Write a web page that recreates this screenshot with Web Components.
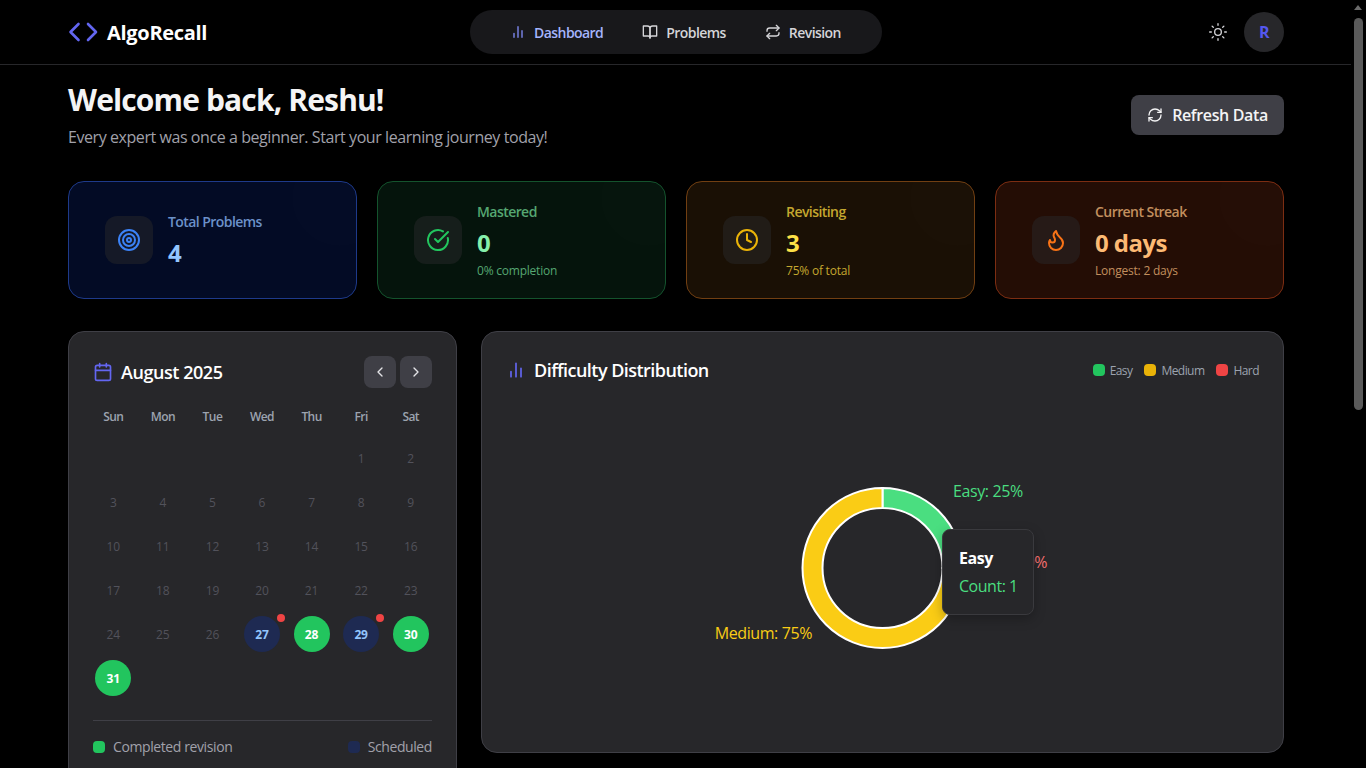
<!DOCTYPE html>
<html lang="en">
<head>
<meta charset="utf-8">
<title>AlgoRecall</title>
<style>
  html,body{ margin:0; height:768px; overflow:hidden; background:#000; }
  body{ font-family:"Open Sans","Noto Sans",sans-serif; color:#fff; letter-spacing:-.56px; }
</style>
</head>
<body>
<x-app>
  <x-header></x-header>
  <x-welcome name="Reshu"></x-welcome>
  <x-stats>
    <x-stat tone="blue" icon="target" label="Total Problems" value="4"></x-stat>
    <x-stat tone="green" icon="check" label="Mastered" value="0" sub="0% completion"></x-stat>
    <x-stat tone="yellow" icon="clock" label="Revisiting" value="3" sub="75% of total"></x-stat>
    <x-stat tone="orange" icon="flame" label="Current Streak" value="0 days" sub="Longest: 2 days"></x-stat>
  </x-stats>
  <x-panels>
    <x-calendar></x-calendar>
    <x-difficulty></x-difficulty>
  </x-panels>
</x-app>
<x-scrollbar></x-scrollbar>

<script>
const ICONS = {
  bars: '<path d="M18 20V10M12 20V4M6 20v-6"/>',
  book: '<path d="M2 3h6a4 4 0 0 1 4 4v14a3 3 0 0 0-3-3H2z"/><path d="M22 3h-6a4 4 0 0 0-4 4v14a3 3 0 0 1 3-3h7z"/>',
  repeat: '<path d="m17 2 4 4-4 4"/><path d="M3 11v-1a4 4 0 0 1 4-4h14"/><path d="m7 22-4-4 4-4"/><path d="M21 13v1a4 4 0 0 1-4 4H3"/>',
  sun: '<circle cx="12" cy="12" r="4"/><path d="M12 2v2M12 20v2M4.93 4.93l1.41 1.41M17.66 17.66l1.41 1.41M2 12h2M20 12h2M6.34 17.66l-1.41 1.41M19.07 4.93l-1.41 1.41"/>',
  refresh: '<path d="M3 12a9 9 0 0 1 9-9 9.75 9.75 0 0 1 6.74 2.74L21 8"/><path d="M21 3v5h-5"/><path d="M21 12a9 9 0 0 1-9 9 9.75 9.75 0 0 1-6.74-2.74L3 16"/><path d="M8 16H3v5"/>',
  target: '<circle cx="12" cy="12" r="10"/><circle cx="12" cy="12" r="6"/><circle cx="12" cy="12" r="2"/>',
  check: '<path d="M21.8 10A10 10 0 1 1 17 3.34"/><path d="m9 11 3 3L22 4"/>',
  clock: '<circle cx="12" cy="12" r="10"/><path d="M12 6v6l4 2"/>',
  flame: '<path d="M8.5 14.5A2.5 2.5 0 0 0 11 12c0-1.38-.5-2-1-3-1.072-2.143-.224-4.054 2-6 .5 2.5 2 4.9 4 6.5 2 1.6 3 3.5 3 5.5a7 7 0 1 1-14 0c0-1.153.433-2.294 1-3a2.5 2.5 0 0 0 2.5 2.5z"/>',
  calendar: '<path d="M8 2v4M16 2v4"/><rect x="3" y="4" width="18" height="18" rx="2"/><path d="M3 10h18"/>',
  left: '<path d="m15 18-6-6 6-6"/>',
  right: '<path d="m9 18 6-6-6-6"/>'
};
const icon = (name, size, color, sw = 2) =>
  `<svg width="${size}" height="${size}" viewBox="0 0 24 24" fill="none" stroke="${color}" stroke-width="${sw}" stroke-linecap="round" stroke-linejoin="round" style="display:block;flex:none">${ICONS[name]}</svg>`;

class Base extends HTMLElement {
  constructor(){
    super();
    this.attachShadow({ mode: 'open' }).innerHTML = this.render();
  }
  attr(n, d=''){ return this.getAttribute(n) ?? d; }
}

class XApp extends HTMLElement {
  constructor(){
    super();
    this.attachShadow({ mode: 'open' }).innerHTML = `
      <style>
        :host{ display:block; width:1351px; }
        ::slotted(x-header){ margin-bottom:17px; }
      </style>
      <slot></slot>`;
  }
}

class XHeader extends HTMLElement {
  constructor(){
    super();
    this.attachShadow({ mode: 'open' }).innerHTML = `
      <style>
        :host{ display:block; border-bottom:1px solid #27272a; }
        .bar{ height:64px; box-sizing:border-box; padding:0 67px 0 68px; display:grid; grid-template-columns:1fr auto 1fr; align-items:center; }
        .brand{ display:flex; align-items:center; gap:9px; font-size:20px; font-weight:700; color:#fff; letter-spacing:-.3px; }
        nav{ height:44px; box-sizing:border-box; background:#18181b; border-radius:22px; padding:0 25px 0 24px; display:flex; align-items:center; gap:7px; }
        a{ display:flex; align-items:center; gap:8px; padding:8px 16px; font-size:14px; font-weight:600; color:#d4d4d8; }
        a.on{ color:#a5b4fc; }
        .right{ display:flex; justify-content:flex-end; align-items:center; gap:16px; }
        .avatar{ width:40px; height:40px; border-radius:50%; background:#27272a; color:#5457ee; display:flex; align-items:center; justify-content:center; font-size:16px; font-weight:700; }
      </style>
      <div class="bar">
        <div class="brand">
          <svg width="30" height="20" viewBox="0 0 30 20" fill="none" stroke="#6366f1" stroke-width="2.6" stroke-linecap="round" stroke-linejoin="round" style="display:block"><path d="M10.5 2 2.5 10l8 8"/><path d="M20 2l8 8-8 8"/></svg>
          <span>AlgoRecall</span>
        </div>
        <nav>
          <a class="on">${icon('bars',16,'#818cf8')}Dashboard</a>
          <a>${icon('book',16,'#d4d4d8')}Problems</a>
          <a>${icon('repeat',16,'#d4d4d8')}Revision</a>
        </nav>
        <div class="right">
          ${icon('sun',20,'#d4d4d8',1.6)}
          <div class="avatar">R</div>
        </div>
      </div>`;
  }
}

class XWelcome extends Base {
  render(){
    return `
      <style>
        :host{ display:flex; justify-content:space-between; align-items:center; margin:0 67px 32px 68px; }
        h1{ margin:0 0 7px; font-size:30px; line-height:36px; font-weight:700; color:#f4f4f5; letter-spacing:-.86px; }
        p{ margin:0; font-size:16px; line-height:24px; color:#a1a1aa; letter-spacing:-.43px; }
        button{ all:unset; height:40px; width:153px; margin-bottom:1px; box-sizing:border-box; display:flex; align-items:center; justify-content:center; gap:9px; border-radius:8px; background:#3f3f46; color:#f4f4f5; font-size:16px; font-weight:600; letter-spacing:-.37px; }
      </style>
      <div>
        <h1>Welcome back, ${this.getAttribute('name')}!</h1>
        <p>Every expert was once a beginner. Start your learning journey today!</p>
      </div>
      <button>${icon('refresh',16,'#f4f4f5')}Refresh Data</button>`;
  }
}

class XStats extends HTMLElement {
  constructor(){
    super();
    this.attachShadow({ mode: 'open' }).innerHTML = `
      <style>:host{ display:grid; grid-template-columns:repeat(4,289px); gap:20px; margin:0 67px 32px 68px; }</style>
      <slot></slot>`;
  }
}

const TONES = {
  blue:   { bg:'#030b25', border:'#1e3a8a', icon:'#3b82f6', label:'#6b91c9', value:'#93c5fd', sub:'#6b91c9' },
  green:  { bg:'#05140c', border:'#14532d', icon:'#22c55e', label:'#55a772', value:'#86efac', sub:'#55a772' },
  yellow: { bg:'#1a1005', border:'#713f12', icon:'#eab308', label:'#c4a72f', value:'#fde047', sub:'#c4a72f' },
  orange: { bg:'#240d05', border:'#7c2d12', icon:'#f97316', label:'#c28f5e', value:'#fdba74', sub:'#c28f5e' }
};

class XStat extends Base {
  render(){
    const t = TONES[this.getAttribute('tone')];
    const sub = this.getAttribute('sub');
    return `
      <style>
        :host{ display:flex; position:relative; overflow:hidden; align-items:center; gap:15px; height:118px; box-sizing:border-box; padding:0 36px; border:1px solid ${t.border}; border-radius:16px; background:${t.bg}; }
        :host::after{ content:""; position:absolute; top:-32px; right:-32px; width:96px; height:96px; border-radius:50%; background:rgba(255,255,255,.007); }
        .ic{ width:48px; height:48px; flex:none; border-radius:12px; background:rgba(39,39,42,.5); display:flex; align-items:center; justify-content:center; }
        .label{ font-size:14px; line-height:20px; font-weight:600; color:${t.label}; }
        .value{ margin-top:5px; font-size:24px; line-height:32px; font-weight:700; color:${t.value}; }
        .sub{ margin-top:4px; font-size:12px; line-height:16px; color:${t.sub}; letter-spacing:-.22px; }
      </style>
      <div class="ic">${icon(this.getAttribute('icon'),24,t.icon)}</div>
      <div>
        <div class="label">${this.getAttribute('label')}</div>
        <div class="value">${this.getAttribute('value')}</div>
        ${sub ? `<div class="sub">${sub}</div>` : ''}
      </div>`;
  }
}

class XPanels extends HTMLElement {
  constructor(){
    super();
    this.attachShadow({ mode: 'open' }).innerHTML = `
      <style>:host{ display:grid; grid-template-columns:389px 803px; gap:24px; align-items:start; margin:0 67px 0 68px; }</style>
      <slot></slot>`;
  }
}

class XDay extends Base {
  render(){
    const kind = this.attr('kind');
    const alert = this.hasAttribute('alert');
    return `
      <style>
        :host{ display:flex; align-items:center; justify-content:center; height:36px; }
        .d{ position:relative; width:36px; height:36px; border-radius:50%; display:flex; align-items:center; justify-content:center; font-size:12px; color:#52525b; letter-spacing:-.12px; }
        .done{ background:#22c55e; color:#fff; font-weight:700; }
        .sched{ background:#1e2a52; color:#93c5fd; font-weight:700; }
        i{ position:absolute; top:-2px; right:-5px; width:8px; height:8px; border-radius:50%; background:#ef4444; }
      </style>
      <div class="d ${kind}"><slot></slot>${alert ? '<i></i>' : ''}</div>`;
  }
}

class XCalendar extends HTMLElement {
  constructor(){
    super();
    const names = ['Sun','Mon','Tue','Wed','Thu','Fri','Sat'];
    const kinds = { 27:'sched', 28:'done', 29:'sched', 30:'done', 31:'done' };
    let cells = '<span></span>'.repeat(5);
    for (let d = 1; d <= 31; d++) {
      cells += `<x-day kind="${kinds[d] || ''}"${d === 27 || d === 29 ? ' alert' : ''}>${d}</x-day>`;
    }
    this.attachShadow({ mode: 'open' }).innerHTML = `
      <style>
        :host{ display:block; box-sizing:border-box; height:480px; padding:24px; background:#27272a; border:1px solid #3f3f46; border-radius:16px; }
        .top{ display:flex; align-items:center; justify-content:space-between; margin-bottom:21px; }
        .title{ display:flex; align-items:center; gap:8px; font-size:18px; font-weight:600; color:#fff; letter-spacing:-.45px; }
        .btns{ display:flex; gap:4px; }
        .btns div{ width:32px; height:32px; border-radius:8px; background:#3f3f46; display:flex; align-items:center; justify-content:center; }
        .week{ display:grid; grid-template-columns:repeat(7,1fr); gap:8px; margin:0 .5px 15px -.5px; font-size:12px; line-height:16px; font-weight:600; color:#9ca3af; text-align:center; }
        .grid{ display:grid; grid-template-columns:repeat(7,1fr); gap:8px; margin:0 .5px 0 -.5px; }
        .legend{ margin-top:24px; padding-top:16px; border-top:1px solid #3f3f46; display:flex; justify-content:space-between; font-size:14px; line-height:20px; color:#a1a1aa; letter-spacing:-.4px; }
        .legend span{ display:flex; align-items:center; gap:8px; }
        .legend b{ width:12px; height:12px; border-radius:4px; }
      </style>
      <div class="top">
        <div class="title">${icon('calendar',20,'#6366f1')}<span>August 2025</span></div>
        <div class="btns"><div>${icon('left',16,'#e4e4e7')}</div><div>${icon('right',16,'#e4e4e7')}</div></div>
      </div>
      <div class="week">${names.map(n => `<div>${n}</div>`).join('')}</div>
      <div class="grid">${cells}</div>
      <div class="legend">
        <span><b style="background:#22c55e"></b>Completed revision</span>
        <span><b style="background:#1e2a52"></b>Scheduled</span>
      </div>`;
  }
}

class XDifficulty extends HTMLElement {
  constructor(){
    super();
    this.attachShadow({ mode: 'open' }).innerHTML = `
      <style>
        :host{ display:block; box-sizing:border-box; height:422px; padding:24px; background:#27272a; border:1px solid #3f3f46; border-radius:16px; }
        .top{ display:flex; align-items:center; justify-content:space-between; height:28px; margin-bottom:24px; }
        .title{ display:flex; align-items:center; gap:8px; font-size:18px; font-weight:600; color:#fff; letter-spacing:-.54px; }
        .keys{ display:flex; gap:12px; font-size:12px; color:#9ca3af; }
        .keys span{ display:flex; align-items:center; gap:5px; }
        .keys b{ width:12px; height:12px; border-radius:4px; }
        .chart{ position:relative; height:320px; }
        svg.pie{ position:absolute; inset:0; display:block; }
        text{ font-size:16px; letter-spacing:-.4px; }
        .tip{ position:absolute; left:436px; top:121px; width:92px; height:86px; box-sizing:border-box; padding:18px 16px 0; background:#27272a; border:1px solid #3a3a3e; border-radius:8px; box-shadow:0 4px 12px rgba(0,0,0,.25); font-size:16px; line-height:20px; letter-spacing:-.48px; }
        .tip b{ display:block; color:#fff; font-weight:700; margin-bottom:8px; }
        .tip span{ color:#4ade80; white-space:nowrap; }
      </style>
      <div class="top">
        <div class="title">${icon('bars',20,'#6366f1')}<span>Difficulty Distribution</span></div>
        <div class="keys">
          <span><b style="background:#22c55e"></b>Easy</span>
          <span><b style="background:#eab308"></b>Medium</span>
          <span><b style="background:#ef4444"></b>Hard</span>
        </div>
      </div>
      <div class="chart">
        <svg class="pie" width="753" height="320" viewBox="0 0 753 320">
          <path d="M376.5 80A80 80 0 0 1 456.5 160L436.5 160A60 60 0 0 0 376.5 100Z" fill="#4ade80" stroke="#fff" stroke-width="2"/>
          <path d="M456.5 160A80 80 0 1 1 376.5 80L376.5 100A60 60 0 1 0 436.5 160Z" fill="#facc15" stroke="#fff" stroke-width="2"/>
          <text x="447" y="89" fill="#4ade80">Easy: 25%</text>
          <text x="306" y="231" fill="#facc15" text-anchor="end">Medium: 75%</text>
          <text x="541" y="160" fill="#f87171" text-anchor="end">Hard: 0%</text>
        </svg>
        <div class="tip"><b>Easy</b><span>Count: 1</span></div>
      </div>`;
  }
}

class XScrollbar extends HTMLElement {
  constructor(){
    super();
    this.attachShadow({ mode: 'open' }).innerHTML = `
      <style>
        :host{ display:block; position:fixed; top:0; right:0; bottom:0; width:15px; background:#000; }
        .up{ position:absolute; top:5px; left:3px; width:0; height:0; border:4.5px solid transparent; border-top:0; border-bottom:5px solid #6b6b6b; }
        .thumb{ position:absolute; top:18px; left:3px; width:9px; height:392px; border-radius:5px; background:#5a5a5a; }
      </style>
      <div class="up"></div><div class="thumb"></div>`;
  }
}

customElements.define('x-app', XApp);
customElements.define('x-header', XHeader);
customElements.define('x-welcome', XWelcome);
customElements.define('x-stats', XStats);
customElements.define('x-stat', XStat);
customElements.define('x-panels', XPanels);
customElements.define('x-day', XDay);
customElements.define('x-calendar', XCalendar);
customElements.define('x-difficulty', XDifficulty);
customElements.define('x-scrollbar', XScrollbar);
</script>
</body>
</html>
